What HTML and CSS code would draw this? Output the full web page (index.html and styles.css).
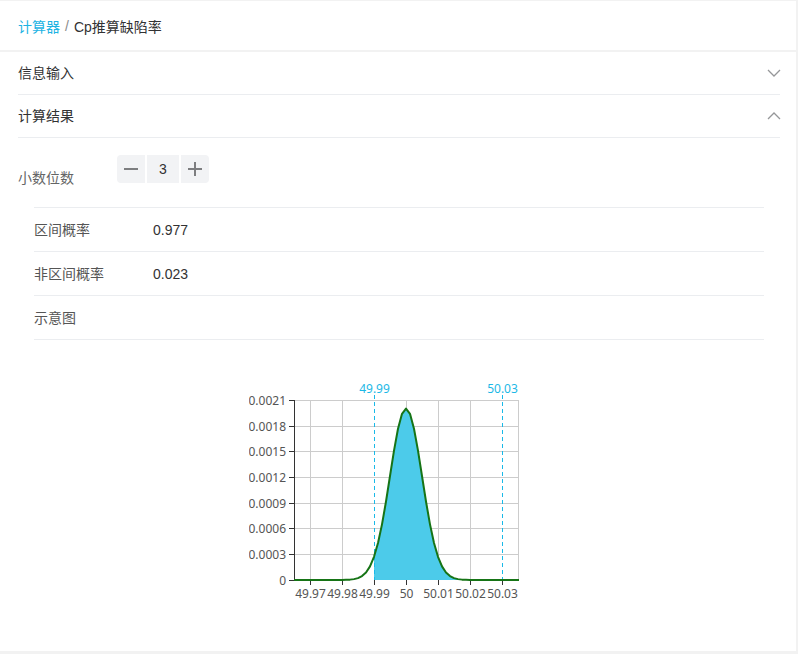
FILE: index.html
```html
<!DOCTYPE html>
<html lang="zh-CN">
<head>
<meta charset="utf-8">
<title>Cp推算缺陷率</title>
<link rel="stylesheet" href="styles.css">
</head>
<body>
<div class="page">
  <header class="crumb">
    <span class="crumb-link">计算器</span><span class="crumb-sep">/</span><span class="crumb-cur">Cp推算缺陷率</span>
  </header>
  <main class="panel">
    <section class="coll-item">
      <div class="coll-title">
        <span>信息输入</span>
        <svg class="chev" width="16" height="16" viewBox="0 0 16 16"><path d="M2 5 L8 11 L14 5" fill="none" stroke="#969799" stroke-width="1.3"/></svg>
      </div>
    </section>
    <section class="coll-item">
      <div class="coll-title">
        <span>计算结果</span>
        <svg class="chev" width="16" height="16" viewBox="0 0 16 16"><path d="M2 11 L8 5 L14 11" fill="none" stroke="#969799" stroke-width="1.3"/></svg>
      </div>
      <div class="coll-content">
        <div class="field">
          <span class="field-label">小数位数</span>
          <div class="stepper">
            <button class="step-btn minus" aria-label="减少"></button>
            <span class="step-input">3</span>
            <button class="step-btn plus" aria-label="增加"></button>
          </div>
        </div>
        <div class="cells">
          <div class="cell"><span class="cell-title">区间概率</span><span class="cell-value">0.977</span></div>
          <div class="cell"><span class="cell-title">非区间概率</span><span class="cell-value">0.023</span></div>
          <div class="cell"><span class="cell-title">示意图</span></div>
        </div>
        <div class="chart">
          <svg width="300" height="240" viewBox="249 370 300 240">
            <g class="grid">
              <line x1="294" y1="400.5" x2="519" y2="400.5"/>
              <line x1="294" y1="426.5" x2="519" y2="426.5"/>
              <line x1="294" y1="451.5" x2="519" y2="451.5"/>
              <line x1="294" y1="477.5" x2="519" y2="477.5"/>
              <line x1="294" y1="503.5" x2="519" y2="503.5"/>
              <line x1="294" y1="528.5" x2="519" y2="528.5"/>
              <line x1="294" y1="554.5" x2="519" y2="554.5"/>
              <line x1="310.5" y1="400" x2="310.5" y2="580"/>
              <line x1="342.5" y1="400" x2="342.5" y2="580"/>
              <line x1="406.5" y1="400" x2="406.5" y2="580"/>
              <line x1="438.5" y1="400" x2="438.5" y2="580"/>
              <line x1="470.5" y1="400" x2="470.5" y2="580"/>
              <line x1="518.5" y1="400" x2="518.5" y2="580"/>
            </g>
            <path class="area" d="M374,580 L374,556.80 L378,542.92 L382,524.34 L386,501.51 L390,476.02 L394,450.60 L398,428.71 L402,413.84 L406,408.57 L410,413.84 L414,428.71 L418,450.60 L422,476.02 L426,501.51 L430,524.34 L434,542.92 L438,556.80 L442,566.36 L446,572.47 L450,576.09 L454,578.10 L458,579.13 L462,579.63 L466,579.85 L470,580 L502,580 Z"/>
            <g class="spec">
              <line x1="374.5" y1="395" x2="374.5" y2="580"/>
              <line x1="502.5" y1="395" x2="502.5" y2="580"/>
            </g>
            <g class="axis">
              <line x1="294.5" y1="400" x2="294.5" y2="581"/>
              <line x1="289" y1="400.5" x2="294" y2="400.5"/>
              <line x1="289" y1="426.5" x2="294" y2="426.5"/>
              <line x1="289" y1="451.5" x2="294" y2="451.5"/>
              <line x1="289" y1="477.5" x2="294" y2="477.5"/>
              <line x1="289" y1="503.5" x2="294" y2="503.5"/>
              <line x1="289" y1="528.5" x2="294" y2="528.5"/>
              <line x1="289" y1="554.5" x2="294" y2="554.5"/>
              <line x1="289" y1="580.5" x2="294" y2="580.5"/>
              <line x1="310.5" y1="580" x2="310.5" y2="585"/>
              <line x1="342.5" y1="580" x2="342.5" y2="585"/>
              <line x1="374.5" y1="580" x2="374.5" y2="585"/>
              <line x1="406.5" y1="580" x2="406.5" y2="585"/>
              <line x1="438.5" y1="580" x2="438.5" y2="585"/>
              <line x1="470.5" y1="580" x2="470.5" y2="585"/>
              <line x1="502.5" y1="580" x2="502.5" y2="585"/>
            </g>
            <path class="curve" d="M294,580 L342,580 L346,579.85 L350,579.63 L354,579.13 L358,578.10 L362,576.09 L366,572.47 L370,566.36 L374,556.80 L378,542.92 L382,524.34 L386,501.51 L390,476.02 L394,450.60 L398,428.71 L402,413.84 L406,408.57 L410,413.84 L414,428.71 L418,450.60 L422,476.02 L426,501.51 L430,524.34 L434,542.92 L438,556.80 L442,566.36 L446,572.47 L450,576.09 L454,578.10 L458,579.13 L462,579.63 L466,579.85 L470,580 L519,580"/>
            <g class="ylab">
              <text x="286" y="404.5">0.0021</text>
              <text x="286" y="430.5">0.0018</text>
              <text x="286" y="455.5">0.0015</text>
              <text x="286" y="481.5">0.0012</text>
              <text x="286" y="507.5">0.0009</text>
              <text x="286" y="532.5">0.0006</text>
              <text x="286" y="558.5">0.0003</text>
              <text x="286" y="584.5">0</text>
            </g>
            <g class="xlab">
              <text x="310.5" y="598">49.97</text>
              <text x="342.5" y="598">49.98</text>
              <text x="374.5" y="598">49.99</text>
              <text x="406.5" y="598">50</text>
              <text x="438.5" y="598">50.01</text>
              <text x="470.5" y="598">50.02</text>
              <text x="502.5" y="598">50.03</text>
            </g>
            <g class="speclab">
              <text x="374.5" y="393">49.99</text>
              <text x="502.5" y="393">50.03</text>
            </g>
          </svg>
        </div>
      </div>
    </section>
  </main>
</div>
</body>
</html>
```

FILE: styles.css
```css
* { box-sizing: border-box; }
html, body { margin: 0; padding: 0; }
body {
  background: #f2f2f2;
  font-family: "Liberation Sans", "Noto Sans CJK SC", sans-serif;
  font-size: 14px;
  color: #323233;
  width: 798px;
  height: 654px;
  overflow: hidden;
}
.page {
  padding-top: 1px;
  display: flex;
  flex-direction: column;
}
.crumb {
  height: 49px;
  background: #fff;
  box-shadow: inset -2px 0 0 #f2f2f2;
  display: flex;
  align-items: center;
  padding: 0 18px;
  color: #323233;
}
.crumb-link { color: #1cb3e3; }
.crumb-sep { color: #8a8a8a; padding: 0 5px 0 5px; }
.panel {
  margin-top: 2px;
  background: #fff;
  box-shadow: inset -2px 0 0 #f2f2f2;
  height: 599px;
}
.coll-title {
  height: 43px;
  margin: 0 18px;
  border-bottom: 1px solid #ebedf0;
  display: flex;
  align-items: center;
  justify-content: space-between;
  line-height: 24px;
}
.chev { margin-right: -2px; }
.coll-content { padding-top: 1px; }
.field {
  display: flex;
  align-items: flex-start;
  padding: 16px 18px 17px;
}
.field-label {
  width: 99px;
  margin-top: 11px;
  line-height: 24px;
  color: #646566;
}
.stepper { display: flex; gap: 2px; }
.step-btn {
  width: 28px;
  height: 28px;
  border: 0;
  padding: 0;
  background: #f2f3f5;
  position: relative;
}
.step-btn.minus { border-radius: 4px 0 0 4px; }
.step-btn.plus { border-radius: 0 4px 4px 0; }
.step-btn::before, .plus::after {
  content: "";
  position: absolute;
  left: 7px;
  top: 13px;
  width: 14px;
  height: 2px;
  background: #7d7e80;
}
.plus::after {
  left: 13px;
  top: 7px;
  width: 2px;
  height: 14px;
}
.step-input {
  width: 32px;
  height: 28px;
  background: #f2f3f5;
  display: flex;
  align-items: center;
  justify-content: center;
  color: #323233;
}
.cells { padding: 0 34px; }
.cell {
  display: flex;
  height: 44px;
  align-items: center;
  border-top: 1px solid #ebedf0;
  padding-top: 1px;
  line-height: 24px;
}
.cell:last-child { border-bottom: 1px solid #ebedf0; height: 45px; }
.cell-title { width: 119px; color: #555; }
.cell-value { color: #323233; }
.chart {
  display: flex;
  justify-content: center;
  margin-top: 30px;
}
.chart svg { display: block; }
.grid line, .axis line, .spec line { shape-rendering: crispEdges; }
.grid line { stroke: #cccccc; stroke-width: 1; }
.spec line { stroke: #19b9e8; stroke-width: 1; stroke-dasharray: 4 3; }
.axis line { stroke: #333; stroke-width: 1; }
.area { fill: #4ccbea; }
.curve { fill: none; stroke: #167416; stroke-width: 2; stroke-linejoin: round; }
.ylab text, .xlab text, .speclab text {
  font-family: "Noto Sans", "Liberation Sans", sans-serif;
  font-size: 12px;
  fill: #555;
}
.ylab text { text-anchor: end; }
.xlab text, .speclab text { text-anchor: middle; }
.speclab text { fill: #1cb8e6; }
```
